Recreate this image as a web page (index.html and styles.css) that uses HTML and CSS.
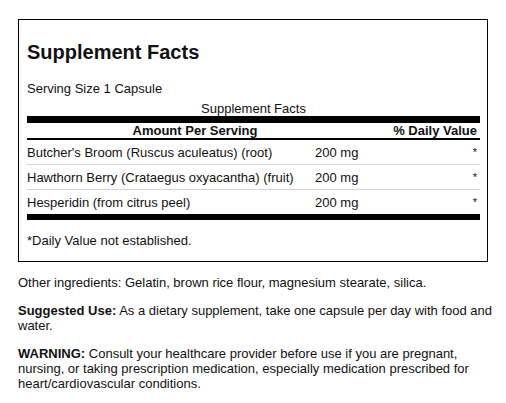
FILE: index.html
```html
<!DOCTYPE html>
<html lang="en">
<head>
    <meta charset="UTF-8">
    <meta name="viewport" content="width=device-width, initial-scale=1.0">
    <title>Supplement Facts</title>
    <link rel="stylesheet" href="styles.css">
</head>
<body>

    <div class="product-info">
        <div class="facts-box">
            <h1 class="facts-title">Supplement Facts</h1>
            <p class="serving">Serving Size 1 Capsule</p>

            <table class="facts-table">
                <caption>Supplement Facts</caption>
                <colgroup>
                    <col class="col-name">
                    <col class="col-amount">
                    <col class="col-dv">
                </colgroup>
                <thead>
                    <tr>
                        <th colspan="2" class="head-amount">Amount Per Serving</th>
                        <th class="head-dv">% Daily Value</th>
                    </tr>
                </thead>
                <tbody>
                    <tr>
                        <td>Butcher's Broom (Ruscus aculeatus) (root)</td>
                        <td>200 mg</td>
                        <td class="dv">*</td>
                    </tr>
                    <tr>
                        <td>Hawthorn Berry (Crataegus oxyacantha) (fruit)</td>
                        <td>200 mg</td>
                        <td class="dv">*</td>
                    </tr>
                    <tr>
                        <td>Hesperidin (from citrus peel)</td>
                        <td>200 mg</td>
                        <td class="dv">*</td>
                    </tr>
                </tbody>
            </table>

            <p class="footnote">*Daily Value not established.</p>
        </div>

        <p class="note">Other ingredients: Gelatin, brown rice flour, magnesium stearate, silica.</p>
        <p class="note"><strong>Suggested Use:</strong> As a dietary supplement, take one capsule per day with food and water.</p>
        <p class="note"><strong>WARNING:</strong> Consult your healthcare provider before use if you are pregnant, nursing, or taking prescription medication, especially medication prescribed for heart/cardiovascular conditions.</p>
    </div>

</body>
</html>
```

FILE: styles.css
```css
:root {
    --font-family-sans: "Liberation Sans", Arial, Helvetica, sans-serif;
    --text-color: #111111;
    --rule-color: #000000;
    --row-line: #d4d4d4;
}

body {
    margin: 0;
    background-color: #ffffff;
    font-family: var(--font-family-sans);
    font-size: 13px;
    line-height: 15px;
    color: var(--text-color);
}

.product-info {
    padding: 19px 18px 0 18px;
}

.facts-box {
    border: 1px solid var(--rule-color);
    padding: 8px 7px 8px 8px;
}

.facts-title {
    margin: 13px 0 0 0;
    font-size: 20px;
    line-height: 23px;
    font-weight: 700;
}

.serving {
    margin: 17px 0 0 0;
}

.facts-table {
    width: 100%;
    margin-top: 5px;
    border-collapse: collapse;
    table-layout: fixed;
}

.facts-table caption {
    text-align: center;
    line-height: 15px;
}

.col-name { width: 288px; }
.col-amount { width: 48px; }

.facts-table thead tr {
    border-top: 7px solid var(--rule-color);
    border-bottom: 2px solid var(--rule-color);
}

.facts-table th {
    padding: 0 3px 0 0;
    font-weight: 700;
}
.facts-table .head-amount { text-align: center; padding: 0; }
.facts-table .head-dv { text-align: right; }

.facts-table td {
    padding: 5px 0 4px 0;
    vertical-align: top;
    white-space: nowrap;
}

.facts-table tbody tr { border-bottom: 1px solid var(--row-line); }
.facts-table tbody tr:last-child { border-bottom: 6px solid var(--rule-color); }

.facts-table .dv {
    text-align: right;
    padding-right: 3px;
    font-size: 11px;
}

.footnote {
    margin: 13px 0 5px 0;
}

.note {
    margin: 13px -8px 0 0;
}
.note strong { font-weight: 700; }
```
